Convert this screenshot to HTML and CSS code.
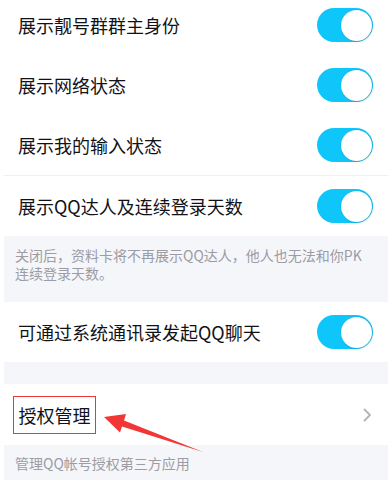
FILE: index.html
```html
<!DOCTYPE html>
<html lang="zh-CN">
<head>
<meta charset="utf-8">
<title>设置</title>
<link rel="stylesheet" href="styles.css">
</head>
<body>
<div class="page">
  <div class="list first">
    <div class="row"><span class="label">展示靓号群群主身份</span><span class="switch"><span class="knob"></span></span></div>
    <div class="row"><span class="label">展示网络状态</span><span class="switch"><span class="knob"></span></span></div>
    <div class="row"><span class="label">展示我的输入状态</span><span class="switch"><span class="knob"></span></span></div>
    <div class="sep"></div>
    <div class="row"><span class="label">展示QQ达人及连续登录天数</span><span class="switch"><span class="knob"></span></span></div>
  </div>
  <div class="note">关闭后，资料卡将不再展示QQ达人，他人也无法和你PK连续登录天数。</div>
  <div class="list">
    <div class="row"><span class="label">可通过系统通讯录发起QQ聊天</span><span class="switch"><span class="knob"></span></span></div>
  </div>
  <div class="gap"></div>
  <div class="list">
    <div class="row row-link"><span class="label boxed">授权管理</span><span class="chev"><svg width="9" height="14" viewBox="0 0 9 14"><path d="M1.5 1.5 L7 7 L1.5 12.5" fill="none" stroke="#b3b3bb" stroke-width="1.8" stroke-linecap="round" stroke-linejoin="round"/></svg></span></div>
  </div>
  <div class="note note-bottom">管理QQ帐号授权第三方应用</div>
</div>
<svg class="arrow" width="388" height="480" viewBox="0 0 388 480">
  <polygon points="104,417 126,414 124,420.5 203,452 122,426.5 120,432.5" fill="#f23535"/>
</svg>
</body>
</html>
```
FILE: styles.css
```css
html, body {
  margin: 0;
  padding: 0;
  background: #ffffff;
}
html {
  height: 480px;
  overflow: hidden;
}
body {
  position: relative;
  width: 388px;
  height: 480px;
  overflow: hidden;
  font-family: "Noto Sans CJK SC", "Noto Sans", sans-serif;
}
.page {
  margin-left: 4px;
  background: #f5f6fa;
  height: 480px;
  overflow: hidden;
}
.list {
  background: #ffffff;
}
.list.first {
  margin-top: -5px;
}
.row {
  height: 60px;
  display: flex;
  align-items: center;
  justify-content: space-between;
  padding: 0 15px 0 14px;
}
.label {
  font-size: 18px;
  color: #111218;
  line-height: 26px;
}
.sep {
  height: 1px;
  background: #eeeff3;
}
.switch {
  width: 56px;
  height: 34px;
  border-radius: 17px;
  background: #0fc6fb;
  display: flex;
  align-items: center;
  justify-content: flex-end;
  padding-right: 1.5px;
  box-sizing: border-box;
}
.knob {
  width: 31px;
  height: 31px;
  border-radius: 50%;
  background: #ffffff;
  box-shadow: 0 0 1px rgba(0,0,0,0.25), 1px 1px 2px rgba(0,0,0,0.12);
}
.note {
  font-size: 14px;
  color: #9c9ca4;
  line-height: 18px;
  padding: 10px 16px 20px 11px;
  height: 36px;
}
.gap {
  height: 22px;
}
.row-link {
  height: 61px;
  padding-left: 9px;
  padding-right: 16px;
}
.boxed {
  border: 1.5px solid #e8383a;
  padding: 5px 4px 5px 4.5px;
}
.chev {
  display: flex;
  align-items: center;
}
.note-bottom {
  padding-top: 9px;
}
.arrow {
  position: absolute;
  left: 0;
  top: 0;
  pointer-events: none;
}
```
